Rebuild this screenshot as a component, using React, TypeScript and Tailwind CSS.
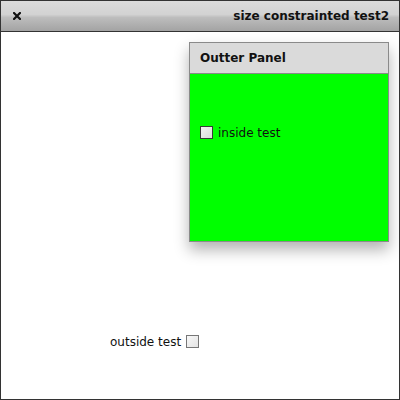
import React from "react";

function Check({ className = "" }: { className?: string }) {
  return (
    <span
      className={
        "inline-block w-[13px] h-[13px] border border-[#3a3a3a] bg-[linear-gradient(135deg,#f4f4f4,#d8dcd8)] " +
        className
      }
    />
  );
}

export default function App() {
  return (
    <div className="w-[400px] h-[400px] bg-white border border-[#333] flex flex-col overflow-hidden font-['DejaVu_Sans',sans-serif] text-[12px] text-black">
      <div className="h-[31px] shrink-0 border-b border-[#333] bg-[linear-gradient(180deg,#dcdcdc_0%,#d2d2d2_45%,#bdbdbd_55%,#a3a3a3_100%)] flex items-center pl-[12px] pr-[10px]">
        <svg width="8" height="8" viewBox="0 0 8 8" className="block">
          <path d="M1 1 L7 7 M7 1 L1 7" stroke="#111" strokeWidth="2.2" strokeLinecap="square" />
        </svg>
        <span className="ml-auto font-bold text-[12px] text-[#111]">size constrainted test2</span>
      </div>
      <div className="flex-1 relative flex flex-col">
        <div className="ml-[188px] mt-[10px] w-[200px] h-[200px] border border-[#8a8a8a] flex flex-col shadow-[0_8px_14px_rgba(0,0,0,0.3)]">
          <div className="h-[31px] bg-[#dadada] border-b border-[#8a8a8a] flex items-center pl-[10px] font-bold text-[12px] text-[#111]">
            Outter Panel
          </div>
          <div className="flex-1 bg-[#00ff00] pt-[52px] pl-[10px]">
            <div className="flex items-center gap-[5px] h-[13px]">
              <Check />
              <span className="text-[#111]">inside test</span>
            </div>
          </div>
        </div>
        <div className="mt-[93px] ml-[109px] flex items-center gap-[5px] h-[13px]">
          <span className="text-[#111]">outside test</span>
          <Check className="border-[#777] bg-[linear-gradient(135deg,#f8f8f8,#e4e4e4)]" />
        </div>
      </div>
    </div>
  );
}
